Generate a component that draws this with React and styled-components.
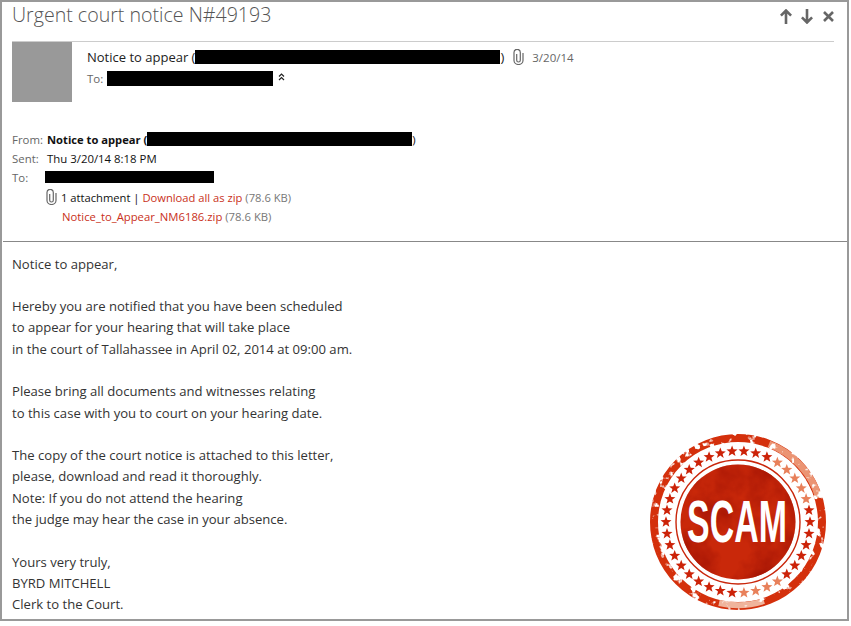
import styled, { createGlobalStyle } from 'styled-components';

const GlobalStyle = createGlobalStyle`
  html, body {
    margin: 0;
    padding: 0;
    background: #fff;
  }
  body {
    font-family: "Open Sans", "Noto Sans", "Liberation Sans", sans-serif;
    color: #333;
  }
`;

const Frame = styled.div`
  box-sizing: border-box;
  width: 849px;
  height: 621px;
  border: 2px solid #999;
  display: flex;
  flex-direction: column;
  overflow: hidden;
`;
const TopBar = styled.div`
  height: 39px;
  margin: 0 13px 0 10px;
  display: flex;
  justify-content: space-between;
  border-bottom: 1px solid #ccc;
`;
const Title = styled.h1`
  margin: 0;
  font-weight: 300;
  font-size: 19.6px;
  line-height: 26px;
  color: #555;
`;
const NavIcons = styled.div`
  display: flex;
  align-items: center;
  gap: 9px;
  margin-top: 7px;
  height: 15px;
`;
const Summary = styled.div`
  display: flex;
  margin-left: 10px;
  height: 60px;
`;
const Avatar = styled.div`
  width: 60px;
  height: 60px;
  background: #999;
  margin-right: 15px;
`;
const SummaryLines = styled.div`
  padding-top: 6px;
  display: flex;
  flex-direction: column;
  gap: 3px;
`;
const Row = styled.div`
  display: flex;
  align-items: center;
  height: ${(p) => p.$h || 18}px;
  font-size: ${(p) => p.$size || 11.4}px;
  color: ${(p) => p.$color || '#333'};
  white-space: pre;
`;
const Redacted = styled.span`
  display: inline-block;
  background: #000;
  width: ${(p) => p.$w}px;
  height: ${(p) => p.$h}px;
  margin-left: ${(p) => p.$left || 0}px;
`;
const DateText = styled.span`
  color: #666;
  font-size: 11.5px;
  margin-left: 8px;
`;
const Details = styled.div`
  margin: 28px 0 0 10px;
  display: flex;
  flex-direction: column;
  gap: 1px;
  height: 111px;
  flex-shrink: 0;
`;
const Label = styled.span`
  color: #666;
  width: ${(p) => p.$w || 35}px;
`;
const Strong = styled.span`
  font-weight: 700;
  font-size: 11.2px;
  color: #111;
`;
const Dark = styled.span`
  color: #111;
`;
const AttachRow = styled(Row)`
  padding-left: ${(p) => p.$indent}px;
  color: #111;
`;
const Link = styled.span`
  color: #c9301a;
`;
const Size = styled.span`
  color: #777;
`;
const Content = styled.div`
  border-top: 1px solid #888;
  margin-left: 1px;
  flex: 1;
  min-height: 0;
  padding: 11.5px 18px 0 9px;
  display: flex;
  justify-content: space-between;
  align-items: flex-end;
`;
const Letter = styled.div`
  align-self: flex-start;
  font-size: 13.1px;
  line-height: 21.3px;
  color: #333;
`;
const Line = styled.div`
  white-space: pre;
  min-height: 21.3px;
`;
const Stamp = styled.svg`
  width: 180px;
  height: 178px;
  margin-bottom: 7px;
  flex-shrink: 0;
`;
const StampText = styled.text`
  font-family: "Liberation Sans", Arial, sans-serif;
  font-weight: 700;
  font-size: 60px;
  fill: #fff;
`;

const letter = [
  'Notice to appear,',
  '',
  'Hereby you are notified that you have been scheduled',
  'to appear for your hearing that will take place',
  'in the court of Tallahassee in April 02, 2014 at 09:00 am.',
  '',
  'Please bring all documents and witnesses relating',
  'to this case with you to court on your hearing date.',
  '',
  'The copy of the court notice is attached to this letter,',
  'please, download and read it thoroughly.',
  'Note: If you do not attend the hearing',
  'the judge may hear the case in your absence.',
  '',
  'Yours very truly,',
  'BYRD MITCHELL',
  'Clerk to the Court.',
];

const Clip = ({ style }) => (
  <svg width="11" height="16" viewBox="0 0 11 16" fill="none" stroke="#666" strokeWidth="1.2" style={style}>
    <path d="M3.7 5v6.2a1.8 1.8 0 0 0 3.6 0V3.5a3.15 3.15 0 0 0-6.3 0v8a4.5 4 0 0 0 9 0V4" />
  </svg>
);

const ArrowUp = () => (
  <svg width="12" height="15" viewBox="0 0 12 15" fill="none" stroke="#666" strokeWidth="2.6">
    <path d="M6 15V2M.9 6.6 6 1.5l5.1 5.1" />
  </svg>
);
const ArrowDown = () => (
  <svg width="12" height="15" viewBox="0 0 12 15" fill="none" stroke="#666" strokeWidth="2.6">
    <path d="M6 0v13M.9 8.4 6 13.5l5.1-5.1" />
  </svg>
);
const CloseX = () => (
  <svg width="11" height="11" viewBox="0 0 11 11" fill="none" stroke="#666" strokeWidth="2.6" style={{ marginLeft: 1 }}>
    <path d="m1 1 9 9M10 1l-9 9" />
  </svg>
);
const Chevrons = () => (
  <svg width="7" height="8" viewBox="0 0 7 8" fill="none" stroke="#222" strokeWidth="1.2" style={{ marginLeft: 5, marginTop: -3 }}>
    <path d="m1 3.5 2.5-2.5L6 3.5M1 7l2.5-2.5L6 7" />
  </svg>
);

const STAR_COUNT = 38;
const starPoints = (cx, cy, r) => {
  const pts = [];
  for (let i = 0; i < 10; i++) {
    const rad = i % 2 === 0 ? r : r * 0.42;
    const a = -Math.PI / 2 + (i * Math.PI) / 5;
    pts.push(`${(cx + rad * Math.cos(a)).toFixed(1)},${(cy + rad * Math.sin(a)).toFixed(1)}`);
  }
  return pts.join(' ');
};

const ScamStamp = () => {
  const stars = Array.from({ length: STAR_COUNT }, (_, i) => {
    const a = (i / STAR_COUNT) * Math.PI * 2;
    const x = 89 + 72 * Math.cos(a);
    const y = 88 + 71 * Math.sin(a);
    const faded = (a > 5.2 && a < 6.1) || (a > 0.9 && a < 1.5);
    return { x, y, faded };
  });
  return (
    <Stamp viewBox="0 0 180 178">
      <defs>
        <filter id="wear" x="-5%" y="-5%" width="110%" height="110%" colorInterpolationFilters="sRGB">
          <feTurbulence type="fractalNoise" baseFrequency="0.12" numOctaves="3" seed="4" result="noise" />
          <feColorMatrix in="noise" type="matrix" values="0 0 0 0 0  0 0 0 0 0  0 0 0 0 0  0 0 0 -8 5.6" result="holes" />
          <feComposite in="SourceGraphic" in2="holes" operator="in" />
        </filter>
        <filter id="mottle" x="0" y="0" width="100%" height="100%" colorInterpolationFilters="sRGB">
          <feTurbulence type="fractalNoise" baseFrequency="0.03" numOctaves="4" seed="9" result="noise" />
          <feColorMatrix in="noise" type="matrix" values="0 0 0 0 0.66  0 0 0 0 0.09  0 0 0 0 0.02  0 0 0 2.4 -0.9" result="tint" />
          <feComposite in="tint" in2="SourceGraphic" operator="in" result="patch" />
          <feMerge>
            <feMergeNode in="SourceGraphic" />
            <feMergeNode in="patch" />
          </feMerge>
        </filter>
      </defs>
      <g filter="url(#wear)">
        <circle cx="89" cy="88" r="84" fill="none" stroke="#d4300c" strokeWidth="8" />
        <path d="M120 10A84 84 0 0 1 170 64" fill="none" stroke="#eb9473" strokeWidth="7" />
        <path d="M70 169a84 84 0 0 0 45-2" fill="none" stroke="#efb49c" strokeWidth="6" />
      </g>
      {stars.map((s, i) => (
        <polygon key={i} points={starPoints(s.x, s.y, 5.8)} fill={s.faded ? '#e8805a' : '#cc2208'} />
      ))}
      <circle cx="89" cy="88" r="62" fill="none" stroke="#c9260b" strokeWidth="1.4" />
      <circle cx="89" cy="88" r="57.5" fill="#c9280a" filter="url(#mottle)" />
      <StampText transform="translate(88 108) scale(0.565 1)" textAnchor="middle">SCAM</StampText>
    </Stamp>
  );
};

export default function App() {
  return (
    <>
      <GlobalStyle />
      <Frame>
        <TopBar>
          <Title>Urgent court notice N#49193</Title>
          <NavIcons>
            <ArrowUp />
            <ArrowDown />
            <CloseX />
          </NavIcons>
        </TopBar>
        <Summary>
          <Avatar />
          <SummaryLines>
            <Row $size={13} $color="#222">
              <span>Notice to appear (</span>
              <Redacted $w={305} $h={14} />
              <span>)</span>
              <Clip style={{ marginLeft: 9 }} />
              <DateText>3/20/14</DateText>
            </Row>
            <Row $color="#666" $size={11.5}>
              <span>To:</span>
              <Redacted $w={166} $h={15} $left={4} />
              <Chevrons />
            </Row>
          </SummaryLines>
        </Summary>
        <Details>
          <Row>
            <Label>From:</Label>
            <Strong>Notice to appear (</Strong>
            <Redacted $w={265} $h={14} />
            <Dark>)</Dark>
          </Row>
          <Row>
            <Label>Sent:</Label>
            <Dark>Thu 3/20/14 8:18 PM</Dark>
          </Row>
          <Row>
            <Label $w={33}>To:</Label>
            <Redacted $w={169} $h={12} />
          </Row>
          <AttachRow $indent={34} $h={20} $size={11.2}>
            <Clip style={{ marginRight: 4 }} />
            <span>
              1 attachment | <Link>Download all as zip</Link> <Size>(78.6 KB)</Size>
            </span>
          </AttachRow>
          <AttachRow $indent={50} $h={17} $size={11.3}>
            <span>
              <Link>Notice_to_Appear_NM6186.zip</Link> <Size>(78.6 KB)</Size>
            </span>
          </AttachRow>
        </Details>
        <Content>
          <Letter>
            {letter.map((line, i) => (
              <Line key={i}>{line}</Line>
            ))}
          </Letter>
          <ScamStamp />
        </Content>
      </Frame>
    </>
  );
}
